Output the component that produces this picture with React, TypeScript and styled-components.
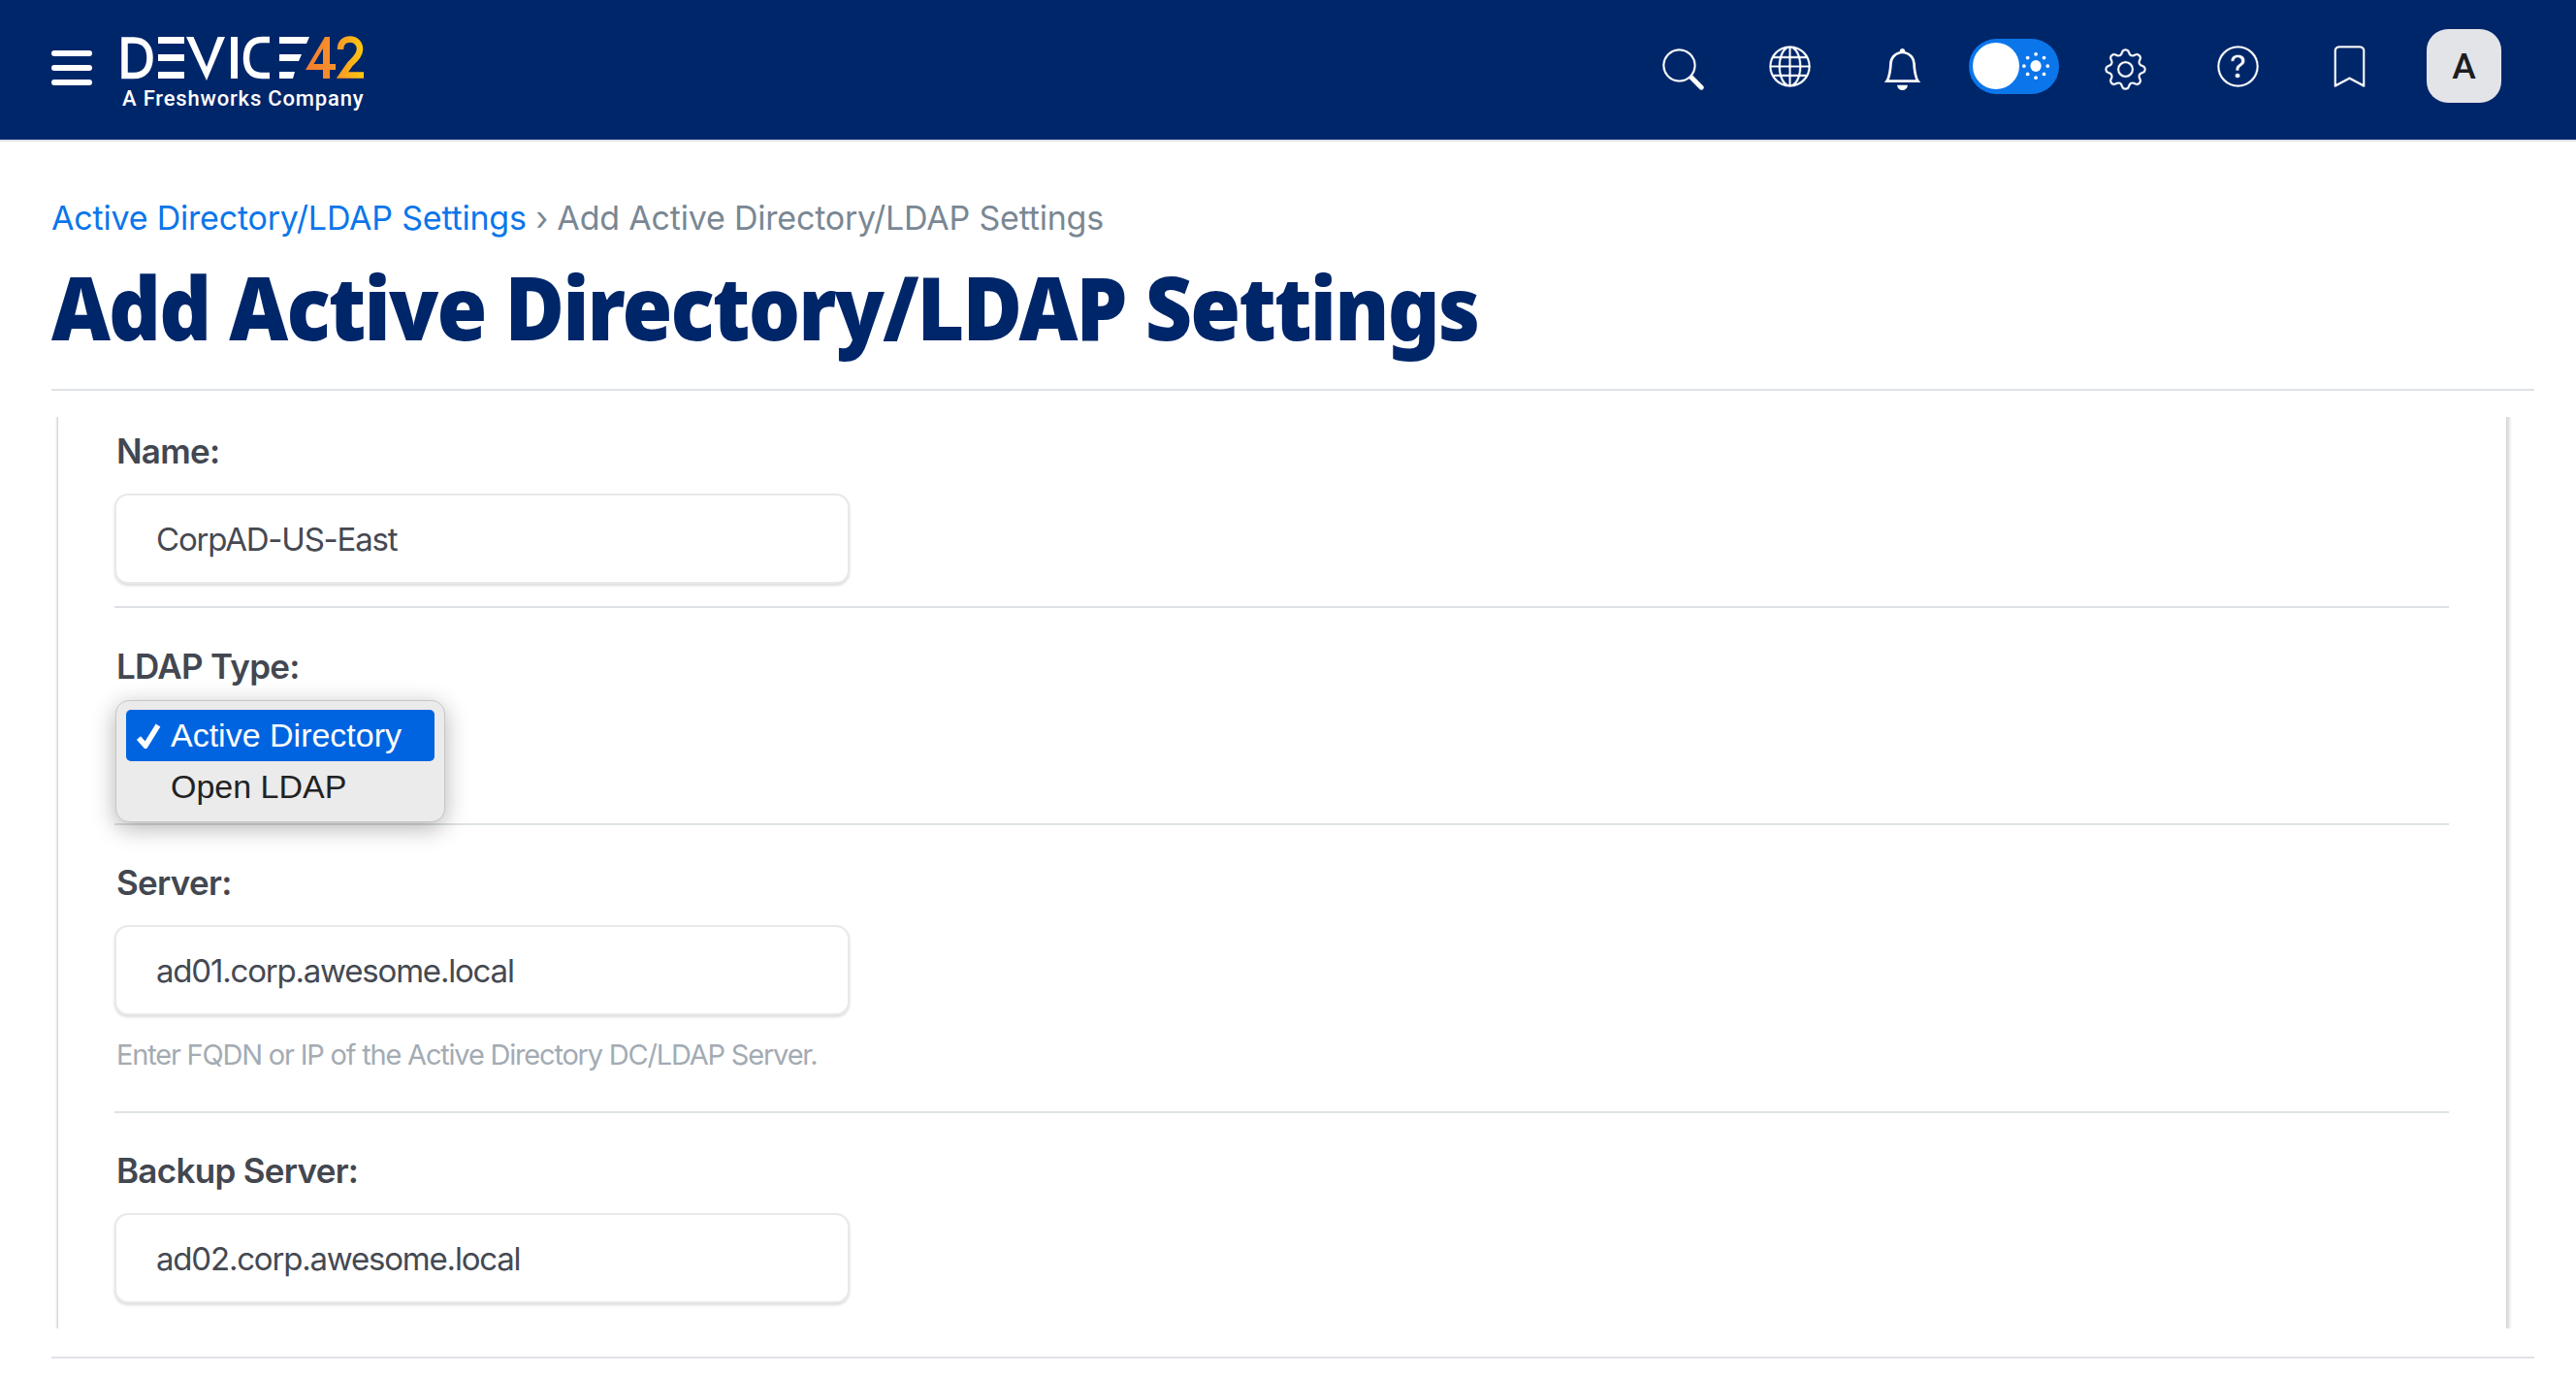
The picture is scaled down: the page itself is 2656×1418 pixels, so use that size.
import React from 'react'
import styled, { createGlobalStyle } from 'styled-components'
import { BsSearch, BsGlobe, BsBell, BsGear, BsQuestionCircle, BsBookmark } from 'react-icons/bs'

const GlobalStyle = createGlobalStyle`
	html, body {
		margin: 0;
		padding: 0;
		background: #ffffff;
		font-family: 'Inter', 'Liberation Sans', sans-serif;
	}
`

const TopBar = styled.header`
	height: 144px;
	background-color: #00266a;
	border-bottom: 2px solid #dee2e6;
	display: flex;
	align-items: center;
	justify-content: space-between;
	padding: 0 77px 0 53px;
`

const Brand = styled.div`
	display: flex;
	align-items: flex-start;
	gap: 30px;
`

const Burger = styled.button`
	width: 42px;
	display: flex;
	flex-direction: column;
	gap: 9px;
	padding: 0;
	margin-top: 22.5px;
	background: transparent;
	border: none;

	span {
		display: block;
		height: 6px;
		border-radius: 3px;
		background: #ffffff;
	}
`

const LogoBox = styled.div`
	display: flex;
	flex-direction: column;
	width: 252px;
	margin-top: 7px;
`

const LogoTag = styled.span`
	font-family: 'Roboto', sans-serif;
	font-weight: 500;
	font-size: 22px;
	line-height: 26px;
	letter-spacing: 0.82px;
	color: #ffffff;
	white-space: nowrap;
	margin-top: 6px;
	margin-left: 1px;
`

const NavIcons = styled.nav`
	display: flex;
	align-items: flex-start;
	margin-bottom: 8px;
`

const NavItem = styled.a<{ $down?: boolean; $width?: number; $solid?: boolean }>`
	width: ${p => p.$width ?? 115.3}px;
	height: 76px;
	display: flex;
	justify-content: center;
	align-items: center;
	color: #ffffff;
	font-size: 43px;

	svg {
		position: relative;
		top: ${p => (p.$down ? '3px' : '0')};
	}

	svg path {
		stroke: ${p => (p.$solid ? 'none' : '#00266a')};
		stroke-width: 0.22;
	}
`

const ThemeToggle = styled.div`
	width: 93px;
	height: 57px;
	border-radius: 29px;
	background: #0b76ea;
	display: flex;
	align-items: center;
	padding-left: 4px;
	gap: 3px;
	box-sizing: border-box;
`

const Knob = styled.span`
	width: 48px;
	height: 48px;
	border-radius: 50%;
	background: #ffffff;
`

const Avatar = styled.div`
	width: 77px;
	height: 76px;
	margin-left: 22px;
	border-radius: 22px;
	background: #e3e4e8;
	color: #1d1d1f;
	font-family: 'Roboto', sans-serif;
	font-size: 37px;
	font-weight: 500;
	display: flex;
	align-items: center;
	justify-content: center;
`

const Page = styled.main`
	padding: 0 43px 0 53px;
`

const Crumbs = styled.div`
	padding-top: 57px;
	font-size: 34px;
	line-height: 44px;
	color: #7a8793;
	letter-spacing: -0.2px;

	a {
		color: #0b76ea;
	}
`

const Title = styled.h1`
	margin: 19px 0 0;
	height: 135px;
	font-family: 'Noto Sans', sans-serif;
	font-weight: 900;
	font-size: 90px;
	line-height: 100px;
	color: #00266a;
	letter-spacing: -2px;
	white-space: nowrap;
	border-bottom: 2px solid #dee2e6;
`

const TitleText = styled.span`
	display: inline-block;
	transform: scaleX(0.933);
	transform-origin: left center;
`

const Panel = styled.section`
	margin: 27px 23px 0 4px;
	padding: 0 65px 26px 61px;
	background:
		linear-gradient(to right, #ffffff, #d2d2d2) left top / 3px 100% no-repeat,
		linear-gradient(to right, #d2d2d2, #ffffff) right top / 6px 100% no-repeat;
`

const BottomRule = styled.hr`
	margin: 29px 0 0;
	border: none;
	border-top: 2px solid #e0e2e8;
`

const Row = styled.div<{ $top: number; $divider?: boolean; $bottom?: number }>`
	padding-top: ${p => p.$top}px;
	padding-bottom: ${p => p.$bottom ?? 0}px;
	border-bottom: ${p => (p.$divider ? '2px solid #dee2e6' : 'none')};
`

const FieldLabel = styled.label`
	display: block;
	font-size: 35px;
	line-height: 46px;
	font-weight: 600;
	letter-spacing: -0.7px;
	color: #434750;
	padding-left: 2px;
`

const TextInput = styled.input`
	display: block;
	box-sizing: border-box;
	width: 758px;
	height: 93px;
	margin-top: 21px;
	padding: 0 41px;
	border: 2px solid #e8e9ec;
	border-radius: 14px;
	box-shadow: 0 2px 3px rgba(0, 0, 0, 0.14);
	background: #ffffff;
	font-family: 'Inter', sans-serif;
	font-size: 33px;
	letter-spacing: -1.2px;
	color: #454952;
	outline: none;
`

const HelpText = styled.div`
	margin-top: 20px;
	padding-left: 2px;
	font-size: 29px;
	line-height: 42px;
	letter-spacing: -1.2px;
	color: #a3abb3;
`

const SelectWrap = styled.div`
	position: relative;
	height: 139px;
`

const SelectMenu = styled.ul`
	position: absolute;
	top: 12px;
	left: 1px;
	width: 340px;
	height: 126px;
	box-sizing: border-box;
	margin: 0;
	padding: 9px 10px;
	list-style: none;
	background: #ebebeb;
	border: 1px solid #c6c6c6;
	border-radius: 14px;
	box-shadow: 0 6px 24px rgba(0, 0, 0, 0.3);
	font-family: 'Liberation Sans', sans-serif;
	font-size: 34px;
`

const SelectOption = styled.li<{ $active?: boolean }>`
	height: 53px;
	display: flex;
	align-items: center;
	gap: 10px;
	padding-left: ${p => (p.$active ? '11px' : '46px')};
	border-radius: 5px;
	background: ${p => (p.$active ? '#0064e1' : 'transparent')};
	color: ${p => (p.$active ? '#ffffff' : '#222222')};
`

const SunIcon = () => (
	<svg width='30' height='30' viewBox='0 0 32 32' fill='#ffffff'>
		<ellipse cx='15' cy='16' rx='6' ry='6.5' />
		<circle cx='15' cy='3' r='2' />
		<circle cx='15' cy='29' r='2' />
		<circle cx='2' cy='16' r='2' />
		<circle cx='28' cy='16' r='2' />
		<circle cx='6' cy='7' r='2' />
		<circle cx='24' cy='7' r='2' />
		<circle cx='6' cy='25' r='2' />
		<circle cx='24' cy='25' r='2' />
	</svg>
)

const LogoMark = () => (
	<svg width='252' height='46' viewBox='125 36 252 46'>
		<defs>
			<linearGradient id='d42' gradientUnits='userSpaceOnUse' x1='315' y1='0' x2='375' y2='0'>
				<stop offset='0' stopColor='#f47b30' />
				<stop offset='0.5' stopColor='#f7932a' />
				<stop offset='1' stopColor='#ffc90e' />
			</linearGradient>
		</defs>
		<g fill='none' stroke='#ffffff' strokeWidth='6.5'>
			<path d='M128.5 40.5 H138 C149 40.5 154.5 48 154.5 58.5 C154.5 69.5 149 77 138 77 H128.5 Z' />
			<path d='M252 59 m26 -19 H270 C258 40 254 49 254 59 C254 69 258 77 270 77 H278' />
		</g>
		<g fill='#ffffff'>
			<rect x='163' y='37' width='27' height='7' />
			<rect x='163' y='55' width='27' height='7' />
			<rect x='163' y='73' width='27' height='7' />
			<path d='M192 37 H199.5 L213 68 L224.5 37 H232 L213 82 Z' />
			<rect x='238' y='37' width='7' height='43' />
			<path d='M288 37 H319 L316 44 H288 Z' />
			<path d='M288 55 H311 L308 62 H288 Z' />
			<path d='M288 73 H304 L302 80 H288 Z' />
		</g>
		<path
			fill='url(#d42)'
			d='M315 71 L335 37 L340 37 V65 H346 V71 H340 V80 H333 V71 Z M323.5 65 H333 V49 Z'
		/>
		<path
			fill='none'
			stroke='url(#d42)'
			strokeWidth='6.5'
			d='M351 50 C351 42 356 39.5 361 39.5 C367 39.5 371 44 371 49.5 C371 56 366 60 361 65 L353 76.5 H375'
		/>
	</svg>
)

const CheckMark = () => (
	<svg width='25' height='26' viewBox='0 0 25 26'>
		<path d='M2 15 L9 23 L22 2' fill='none' stroke='#ffffff' strokeWidth='5.5' />
	</svg>
)

const App = () => {
	return (
		<>
			<GlobalStyle />
			<TopBar>
				<Brand>
					<Burger>
						<span />
						<span />
						<span />
					</Burger>
					<LogoBox>
						<LogoMark />
						<LogoTag>A Freshworks Company</LogoTag>
					</LogoBox>
				</Brand>
				<NavIcons>
					<NavItem $down $width={105}><BsSearch /></NavItem>
					<NavItem><BsGlobe /></NavItem>
					<NavItem $down $solid><BsBell /></NavItem>
					<NavItem>
						<ThemeToggle>
							<Knob />
							<SunIcon />
						</ThemeToggle>
					</NavItem>
					<NavItem $down><BsGear /></NavItem>
					<NavItem><BsQuestionCircle /></NavItem>
					<NavItem><BsBookmark /></NavItem>
					<Avatar>A</Avatar>
				</NavIcons>
			</TopBar>
			<Page>
				<Crumbs>
					<a>Active Directory/LDAP Settings</a> › Add Active Directory/LDAP Settings
				</Crumbs>
				<Title><TitleText>Add Active Directory/LDAP Settings</TitleText></Title>
				<Panel>
					<Row $top={12} $bottom={23} $divider>
						<FieldLabel>Name:</FieldLabel>
						<TextInput readOnly value='CorpAD-US-East' />
					</Row>
					<Row $top={37} $divider>
						<FieldLabel>LDAP Type:</FieldLabel>
						<SelectWrap>
							<SelectMenu>
								<SelectOption $active>
									<CheckMark />
									Active Directory
								</SelectOption>
								<SelectOption>Open LDAP</SelectOption>
							</SelectMenu>
						</SelectWrap>
					</Row>
					<Row $top={36} $bottom={37} $divider>
						<FieldLabel>Server:</FieldLabel>
						<TextInput readOnly value='ad01.corp.awesome.local' />
						<HelpText>Enter FQDN or IP of the Active Directory DC/LDAP Server.</HelpText>
					</Row>
					<Row $top={36}>
						<FieldLabel>Backup Server:</FieldLabel>
						<TextInput readOnly value='ad02.corp.awesome.local' />
					</Row>
				</Panel>
				<BottomRule />
			</Page>
		</>
	)
}

export default App
